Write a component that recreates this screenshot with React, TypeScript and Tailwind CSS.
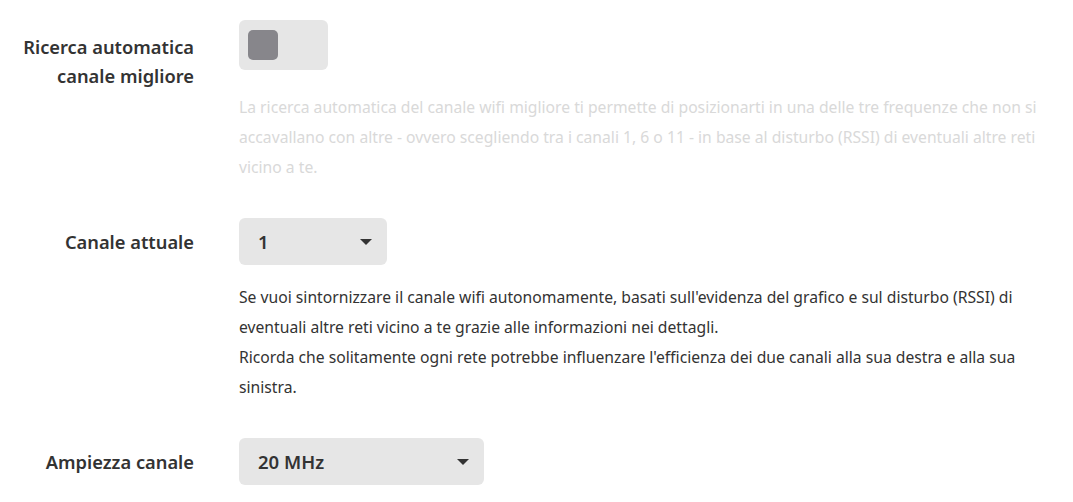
export default function App() {
  return (
    <div className="min-h-screen bg-white pt-5 font-['Noto_Sans','Lato',sans-serif] text-[#333333]">
      <div className="flex flex-col">
        {/* ricerca automatica */}
        <div className="flex">
          <div className="w-[194px] shrink-0 pt-[12px] text-right text-[18.3px] font-semibold leading-[29px]">
            Ricerca automatica
            <br />
            canale migliore
          </div>
          <div className="ml-[45px] flex-1 pr-5">
            <div className="flex h-[50px] w-[89px] items-center rounded-md bg-[#e6e6e6] pl-[9px]">
              <div className="h-[30px] w-[30px] rounded-[5px] bg-[#87868b]" />
            </div>
            <p className="mt-[22px] text-[15.7px] leading-[30px] text-[#d9d9d9]">
              La ricerca automatica del canale wifi migliore ti permette di posizionarti in una delle tre frequenze che non si accavallano con altre - ovvero scegliendo tra i canali 1, 6 o 11 - in base al disturbo (RSSI) di eventuali altre reti vicino a te.
            </p>
          </div>
        </div>

        {/* canale attuale */}
        <div className="mt-[36px] flex">
          <div className="flex h-[47px] w-[194px] shrink-0 items-center justify-end text-[18.3px] font-semibold">
            Canale attuale
          </div>
          <div className="ml-[45px] flex-1 pr-5">
            <div className="flex h-[47px] w-[148px] items-center justify-between rounded-md bg-[#e6e6e6] pl-[19px] pr-[15px] text-[18.5px] font-semibold">
              <span>1</span>
              <span className="h-0 w-0 border-x-[6px] border-t-[6px] border-x-transparent border-t-[#333333]" />
            </div>
            <p className="mt-[17px] text-[15.7px] leading-[30px] text-[#333333]">
              Se vuoi sintornizzare il canale wifi autonomamente, basati sull'evidenza del grafico e sul disturbo (RSSI) di eventuali altre reti vicino a te grazie alle informazioni nei dettagli.
              <br />
              Ricorda che solitamente ogni rete potrebbe influenzare l'efficienza dei due canali alla sua destra e alla sua sinistra.
            </p>
          </div>
        </div>

        {/* ampiezza canale */}
        <div className="mt-[36px] flex">
          <div className="flex h-[47px] w-[194px] shrink-0 items-center justify-end text-[18.3px] font-semibold">
            Ampiezza canale
          </div>
          <div className="ml-[45px] flex-1 pr-5">
            <div className="flex h-[47px] w-[245px] items-center justify-between rounded-md bg-[#e6e6e6] pl-[19px] pr-[15px] text-[18.5px] font-semibold">
              <span>20 MHz</span>
              <span className="h-0 w-0 border-x-[6px] border-t-[6px] border-x-transparent border-t-[#333333]" />
            </div>
          </div>
        </div>
      </div>
    </div>
  );
}
